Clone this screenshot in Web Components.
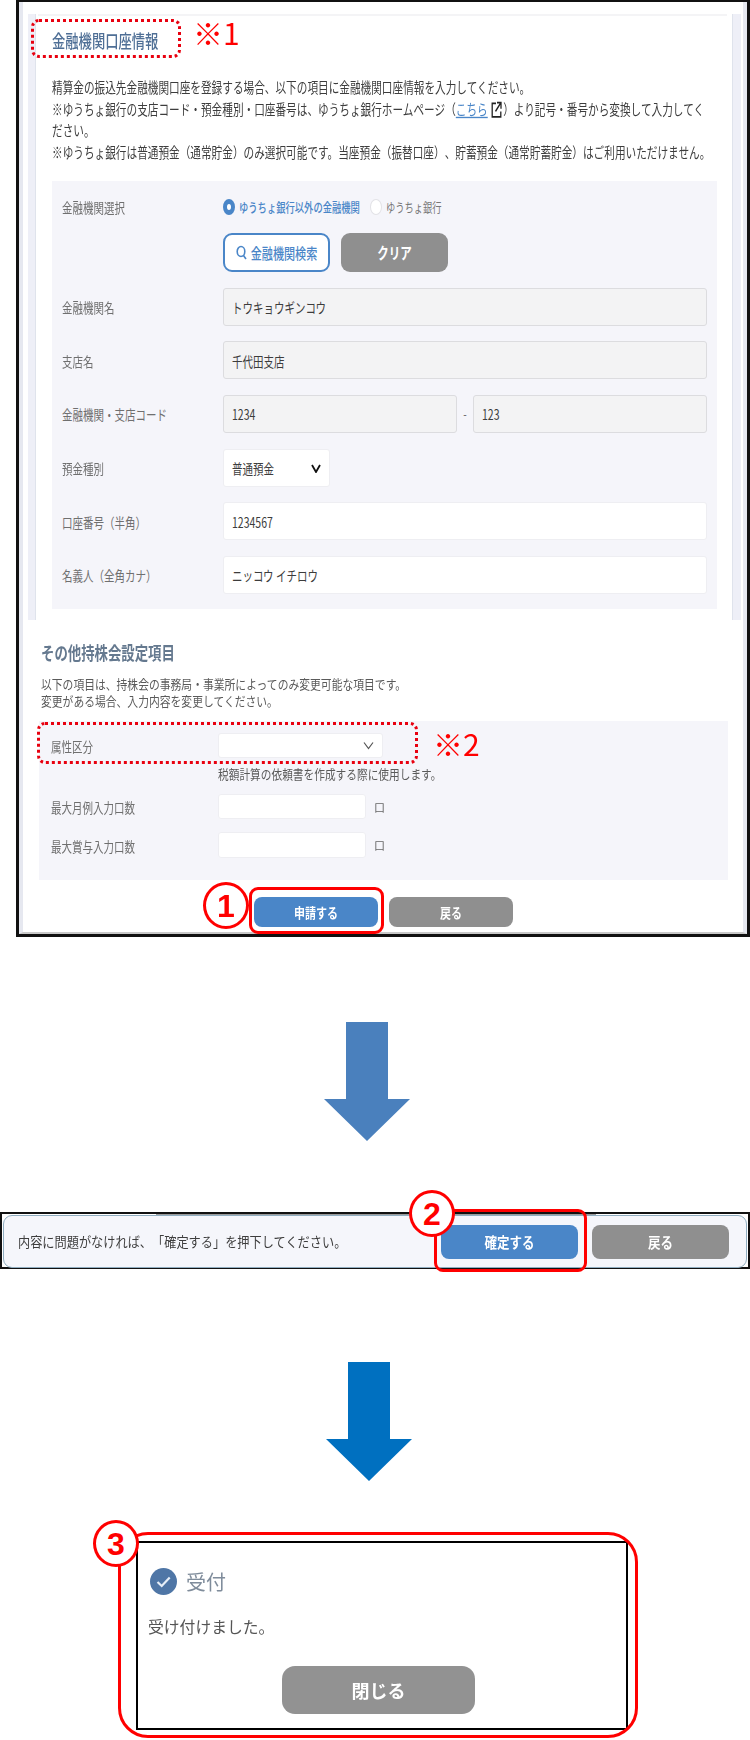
<!DOCTYPE html>
<html lang="ja">
<head>
<meta charset="utf-8">
<title>金融機関口座情報</title>
<style>
  html, body { margin: 0; padding: 0; background: #fff; }
  body { font-family: "Noto Sans CJK JP", "Liberation Sans", sans-serif; text-spacing-trim: space-all; }
</style>
</head>
<body>
<flow-page>
  <bank-form></bank-form>
  <down-arrow color="#4a80bd" style="margin:85px 0 0 324px"></down-arrow>
  <confirm-bar style="margin-top:71px"></confirm-bar>
  <down-arrow color="#0070c0" style="margin:93px 0 0 326px"></down-arrow>
  <receipt-dialog style="margin:60px 0 0 136px"></receipt-dialog>

  <!-- annotations drawn over the screenshots -->
  <red-box dotted style="left:31px;top:19px;width:150px;height:39px"></red-box>
  <red-note style="left:193px;top:12px">※1</red-note>
  <red-box dotted style="left:37px;top:722px;width:381px;height:42px"></red-box>
  <red-note style="left:433px;top:723px">※2</red-note>
  <red-box style="left:249px;top:887px;width:135px;height:47px"></red-box>
  <num-mark style="left:203px;top:882px">1</num-mark>
  <red-box style="left:434px;top:1209px;width:153px;height:63px"></red-box>
  <num-mark style="left:409px;top:1190px">2</num-mark>
  <red-box round style="left:118px;top:1532px;width:520px;height:206px"></red-box>
  <num-mark style="left:93px;top:1520px">3</num-mark>
</flow-page>

<script>
// shared rule: the screenshots are stretched vertically, so the text is too
const tall = (k) => `display:inline-block;transform:scaleY(${k});`;

class FlowPage extends HTMLElement {
  constructor() {
    super();
    this.attachShadow({ mode: 'open' });
    this.shadowRoot.innerHTML = `
      <style>
        :host { display: flex; flex-direction: column; align-items: flex-start; position: relative; width: 750px; height: 1740px; overflow: hidden; }
      </style>
      <slot></slot>`;
  }
}

class RedBox extends HTMLElement {
  constructor() {
    super();
    this.attachShadow({ mode: 'open' });
    this.shadowRoot.innerHTML = `
      <style>
        :host { display: block; position: absolute; box-sizing: border-box; border: 3px solid #f00; border-radius: 9px; }
        :host([dotted]) { border: 3px dotted #e8000f; border-radius: 8px; }
        :host([round]) { border-radius: 30px; }
      </style>`;
  }
}

class RedNote extends HTMLElement {
  constructor() {
    super();
    this.attachShadow({ mode: 'open' });
    this.shadowRoot.innerHTML = `
      <style>
        :host { display: block; position: absolute; color: #f00; font: 30px/40px "Noto Sans CJK JP", "Liberation Sans", sans-serif; white-space: nowrap; }
      </style>
      <slot></slot>`;
  }
}

class NumMark extends HTMLElement {
  constructor() {
    super();
    this.attachShadow({ mode: 'open' });
    this.shadowRoot.innerHTML = `
      <style>
        :host { display: flex; align-items: center; justify-content: center; position: absolute; box-sizing: border-box; width: 46px; height: 47px; background: #fff; border: 3.5px solid #f00; border-radius: 50%; color: #f00; font: bold 32px/1 "Liberation Sans", sans-serif; }
      </style>
      <slot></slot>`;
  }
}

class DownArrow extends HTMLElement {
  constructor() {
    super();
    this.attachShadow({ mode: 'open' });
    const c = this.getAttribute('color');
    this.shadowRoot.innerHTML = `
      <style>:host { display: block; width: 86px; height: 119px; } svg { display: block; }</style>
      <svg width="86" height="119" viewBox="0 0 86 119"><polygon fill="${c}" points="22,0 64,0 64,77 86,77 43,119 0,77 22,77"/></svg>`;
  }
}

class UiBtn extends HTMLElement {
  constructor() {
    super();
    this.attachShadow({ mode: 'open' });
    this.shadowRoot.innerHTML = `
      <style>
        :host { display: flex; align-items: center; justify-content: center; gap: 4px; box-sizing: border-box; width: var(--w, 124px); height: var(--h, 30px); border-radius: var(--r, 8px); background: #8f8f8f; color: #fff; font-size: var(--fs, 11px); font-weight: 700; flex: none; }
        :host([kind=blue]) { background: #4a86c8; }
        :host([kind=line]) { background: #fff; border: 2px solid #4a86c8; color: #4a86c8; font-weight: 500; font-size: 11.1px; }
        span { ${tall('var(--k, 1.25)')} }
      </style>
      <slot name="icon"></slot><span><slot></slot></span>`;
  }
}

class RadioOpt extends HTMLElement {
  constructor() {
    super();
    this.attachShadow({ mode: 'open' });
    this.shadowRoot.innerHTML = `
      <style>
        :host { display: inline-flex; align-items: center; gap: 4px; color: #777; font-size: 9.3px; }
        :host([checked]) { color: #4a86c8; font-weight: 500; }
        i { display: block; box-sizing: border-box; width: 12px; height: 16px; border-radius: 50%; background: #fff; border: 1px solid #e2e2e6; }
        :host([checked]) i { border-width: 5px 4px; border-color: #4a86c8; }
        span { ${tall(1.35)} }
      </style>
      <i></i><span><slot></slot></span>`;
  }
}

class TextField extends HTMLElement {
  constructor() {
    super();
    this.attachShadow({ mode: 'open' });
    this.shadowRoot.innerHTML = `
      <style>
        :host { display: flex; align-items: center; justify-content: space-between; box-sizing: border-box; height: var(--fh, 38px); width: var(--fw, auto); padding: 0 8px; background: #fff; border: 1px solid #eeeef2; border-radius: 3px; color: #3c3c3c; font-size: 10.5px; flex: var(--ff, none); }
        :host([off]) { background: #f3f3f4; border: 1.5px solid #dcdcdf; }
        span { ${tall(1.35)} }
        svg { display: block; flex: none; }
      </style>
      <span><slot></slot></span><slot name="end"></slot>`;
  }
}

class FormRow extends HTMLElement {
  constructor() {
    super();
    this.attachShadow({ mode: 'open' });
    this.shadowRoot.innerHTML = `
      <style>
        :host { display: grid; grid-template-columns: var(--lw, 161px) 1fr; align-items: var(--al, center); color: #6f6f6f; font-size: var(--ls, 10.5px); }
        label { ${tall(1.35)} transform-origin: left center; justify-self: start; padding-top: var(--lp, 0); }
        div { display: flex; align-items: center; gap: var(--fg, 0); }
      </style>
      <label>${this.getAttribute('label')}</label><div><slot></slot></div>`;
  }
}

class BankForm extends HTMLElement {
  constructor() {
    super();
    this.attachShadow({ mode: 'open' });
    this.shadowRoot.innerHTML = `
      <style>
        :host { display: block; box-sizing: border-box; width: 734px; height: 937px; margin-left: 16px; border: 3px solid #111; border-top-width: 2px; font-family: "Noto Sans CJK JP", "Liberation Sans", sans-serif; filter: blur(.35px); }
        .skin { box-sizing: border-box; height: 100%; padding-top: 12px; border: solid #e6e8f0; border-width: 0 4px; border-bottom: 2px solid #c9c9c9; }
        .upper { box-sizing: border-box; height: 606px; margin: 0 2px 0 5px; padding: 15px 16px 0 17px; border: solid #eeeff7; border-width: 0 8px 0 7px; box-shadow: inset 1px 0 #dfe3ec, inset -1px 0 #dfe3ec; background: linear-gradient(#f4f4f6, #f4f4f6) 3px 0 / 689px 2px no-repeat; }
        h2 { margin: 0 0 24px; height: 24px; font-size: 13.3px; line-height: 24px; font-weight: 500; color: #4f6f96; }
        h2 span, p span, h3 span { ${tall(1.35)} transform-origin: left center; }
        p { margin: 0; font-size: 10.65px; line-height: 21.7px; color: #3d3d3d; white-space: nowrap; }
        a { color: #4a86c8; text-decoration: underline; }
        p svg { vertical-align: -2px; margin: 0 1px; }
        .panel { background: #f5f5fa; margin-top: 17px; padding: 18px 10px 15px; display: flex; flex-direction: column; gap: 15.7px; }
        .radios { display: flex; gap: 10px; height: 16px; align-items: center; }
        .btns { display: flex; gap: 11px; margin-top: 18px; --w: 107px; --h: 39px; --fs: 11.5px; --r: 9px; --k: 1.35; }
        .pick { display: flex; flex-direction: column; }
        .dash { width: 16px; text-align: center; font-size: 10px; color: #444; flex: none; }
        .lower { padding: 20px 0 0; }
        h3 { margin: 0 0 11px 18px; height: 24px; font-size: 13.4px; line-height: 24px; font-weight: 700; color: #65798f; }
        .lower p { margin-left: 18px; font-size: 10.8px; line-height: 16.5px; color: #5a5a5a; }
        .lower p span { transform: scaleY(1.2); }
        .panel2 { margin: 13px 0 0 16px; width: 689px; height: 159px; box-sizing: border-box; background: #f5f5fa; padding: 12px 0 0 12px; display: flex; flex-direction: column; gap: 13px; --lw: 167px; --ls: 10.5px; --fh: 25px; }
        .hint { margin: -5px 0 -1px 167px; height: 16px; font-size: 10.7px; line-height: 16px; color: #5a5a5a; white-space: nowrap; }
        .hint span { ${tall(1.2)} }
        .unit { font-size: 11px; color: #666; margin-left: 8px; }
        .acts { display: flex; gap: 11px; margin: 17px 0 0 231px; }
      </style>
      <div class="skin">
        <section class="upper">
          <h2><span>金融機関口座情報</span></h2>
          <p><span>精算金の振込先金融機関口座を登録する場合、以下の項目に金融機関口座情報を入力してください。</span><br>
          <span>※ゆうちょ銀行の支店コード・預金種別・口座番号は、ゆうちょ銀行ホームページ（<a>こちら</a> <svg width="11" height="13" viewBox="0 0 11 13" fill="none" stroke="#222" stroke-width="1.3"><path d="M5 2H1.2v10h8.6V8"/><path d="M4.5 8 9.5 2M6 1.5h4v4.5"/></svg>）より記号・番号から変換して入力してく</span><br>
          <span>ださい。</span><br>
          <span>※ゆうちょ銀行は普通預金（通常貯金）のみ選択可能です。当座預金（振替口座）、貯蓄預金（通常貯蓄貯金）はご利用いただけません。</span></p>
          <div class="panel">
            <form-row label="金融機関選択" style="--al:start">
              <div class="pick">
                <div class="radios"><radio-opt checked>ゆうちょ銀行以外の金融機関</radio-opt><radio-opt>ゆうちょ銀行</radio-opt></div>
                <div class="btns">
                  <ui-btn kind="line"><svg slot="icon" width="11" height="15" viewBox="0 0 11 15" fill="none" stroke="#4a86c8" stroke-width="1.6"><ellipse cx="5" cy="6.5" rx="3.8" ry="5"/><path d="M7.5 10.5 10 14"/></svg>金融機関検索</ui-btn>
                  <ui-btn>クリア</ui-btn>
                </div>
              </div>
            </form-row>
            <form-row label="金融機関名"><text-field off style="--ff:1">トウキョウギンコウ</text-field></form-row>
            <form-row label="支店名"><text-field off style="--ff:1">千代田支店</text-field></form-row>
            <form-row label="金融機関・支店コード"><text-field off style="--ff:1">1234</text-field><span class="dash">-</span><text-field off style="--ff:1">123</text-field></form-row>
            <form-row label="預金種別"><text-field style="--fw:107px">普通預金<svg slot="end" width="10" height="10" viewBox="0 0 10 10" fill="none" stroke="#111" stroke-width="1.8"><path d="M1 2l4 7 4-7"/></svg></text-field></form-row>
            <form-row label="口座番号（半角）"><text-field style="--ff:1">1234567</text-field></form-row>
            <form-row label="名義人（全角カナ）"><text-field style="--ff:1">ニッコウ イチロウ</text-field></form-row>
          </div>
        </section>
        <section class="lower">
          <h3><span>その他持株会設定項目</span></h3>
          <p><span>以下の項目は、持株会の事務局・事業所によってのみ変更可能な項目です。</span><br><span>変更がある場合、入力内容を変更してください。</span></p>
          <div class="panel2">
            <form-row label="属性区分"><text-field style="--fw:165px"><svg slot="end" width="11" height="9" viewBox="0 0 11 9" fill="none" stroke="#555" stroke-width="1.2"><path d="M1 1.5l4.5 6 4.5-6"/></svg></text-field></form-row>
            <div class="hint"><span>税額計算の依頼書を作成する際に使用します。</span></div>
            <form-row label="最大月例入力口数"><text-field style="--fw:148px"></text-field><span class="unit">口</span></form-row>
            <form-row label="最大賞与入力口数"><text-field style="--fw:148px;--fh:26px"></text-field><span class="unit">口</span></form-row>
          </div>
          <div class="acts"><ui-btn kind="blue">申請する</ui-btn><ui-btn>戻る</ui-btn></div>
        </section>
      </div>`;
  }
}

class ConfirmBar extends HTMLElement {
  constructor() {
    super();
    this.attachShadow({ mode: 'open' });
    this.shadowRoot.innerHTML = `
      <style>
        :host { display: block; box-sizing: border-box; width: 750px; height: 57px; border: 2px solid #111; background: linear-gradient(#9a9a9a, #9a9a9a) 154px 0 / 440px 4px no-repeat #fff; filter: blur(.3px); }
        .in { box-sizing: border-box; height: 100%; margin: 1px 1px 0; display: flex; align-items: center; padding: 0 17px 0 14px; background: #f5f6fb; border: 1.5px solid #8fadc0; border-radius: 9px; }
        .msg { font-size: 12.2px; color: #3d3d3d; white-space: nowrap; flex: 1; }
        .msg span { ${tall(1.1)} }
        .btns { display: flex; gap: 14px; --w: 137px; --h: 34px; --fs: 12.5px; --k: 1.15; }
      </style>
      <div class="in">
        <div class="msg"><span>内容に問題がなければ、「確定する」を押下してください。</span></div>
        <div class="btns"><ui-btn kind="blue">確定する</ui-btn><ui-btn>戻る</ui-btn></div>
      </div>`;
  }
}

class ReceiptDialog extends HTMLElement {
  constructor() {
    super();
    this.attachShadow({ mode: 'open' });
    this.shadowRoot.innerHTML = `
      <style>
        :host { display: block; box-sizing: border-box; width: 492px; height: 189px; border: 2px solid #000; padding: 25px 0 0 10px; }
        .head { display: flex; align-items: center; gap: 9px; margin-left: 2px; font-size: 20px; line-height: 27px; color: #7f8c9b; filter: blur(.4px); }
        svg { display: block; }
        .msg { margin-top: 20px; font-size: 15.8px; line-height: 24px; color: #555; filter: blur(.4px); }
        .acts { margin: 27px 0 0 134px; --w: 193px; --h: 48px; --fs: 18px; --r: 13px; --k: 1; filter: blur(.4px); }
        ui-btn { background: #929292; }
      </style>
      <div class="head"><svg width="27" height="27" viewBox="0 0 27 27"><circle cx="13.5" cy="13.5" r="13.5" fill="#4f76a6"/><path d="M7.5 14l4.2 4 8-8.5" fill="none" stroke="#e6eef8" stroke-width="2.2"/></svg>受付</div>
      <div class="msg">受け付けました。</div>
      <div class="acts"><ui-btn>閉じる</ui-btn></div>`;
  }
}

customElements.define('flow-page', FlowPage);
customElements.define('red-box', RedBox);
customElements.define('red-note', RedNote);
customElements.define('num-mark', NumMark);
customElements.define('down-arrow', DownArrow);
customElements.define('ui-btn', UiBtn);
customElements.define('radio-opt', RadioOpt);
customElements.define('text-field', TextField);
customElements.define('form-row', FormRow);
customElements.define('bank-form', BankForm);
customElements.define('confirm-bar', ConfirmBar);
customElements.define('receipt-dialog', ReceiptDialog);
</script>
</body>
</html>
